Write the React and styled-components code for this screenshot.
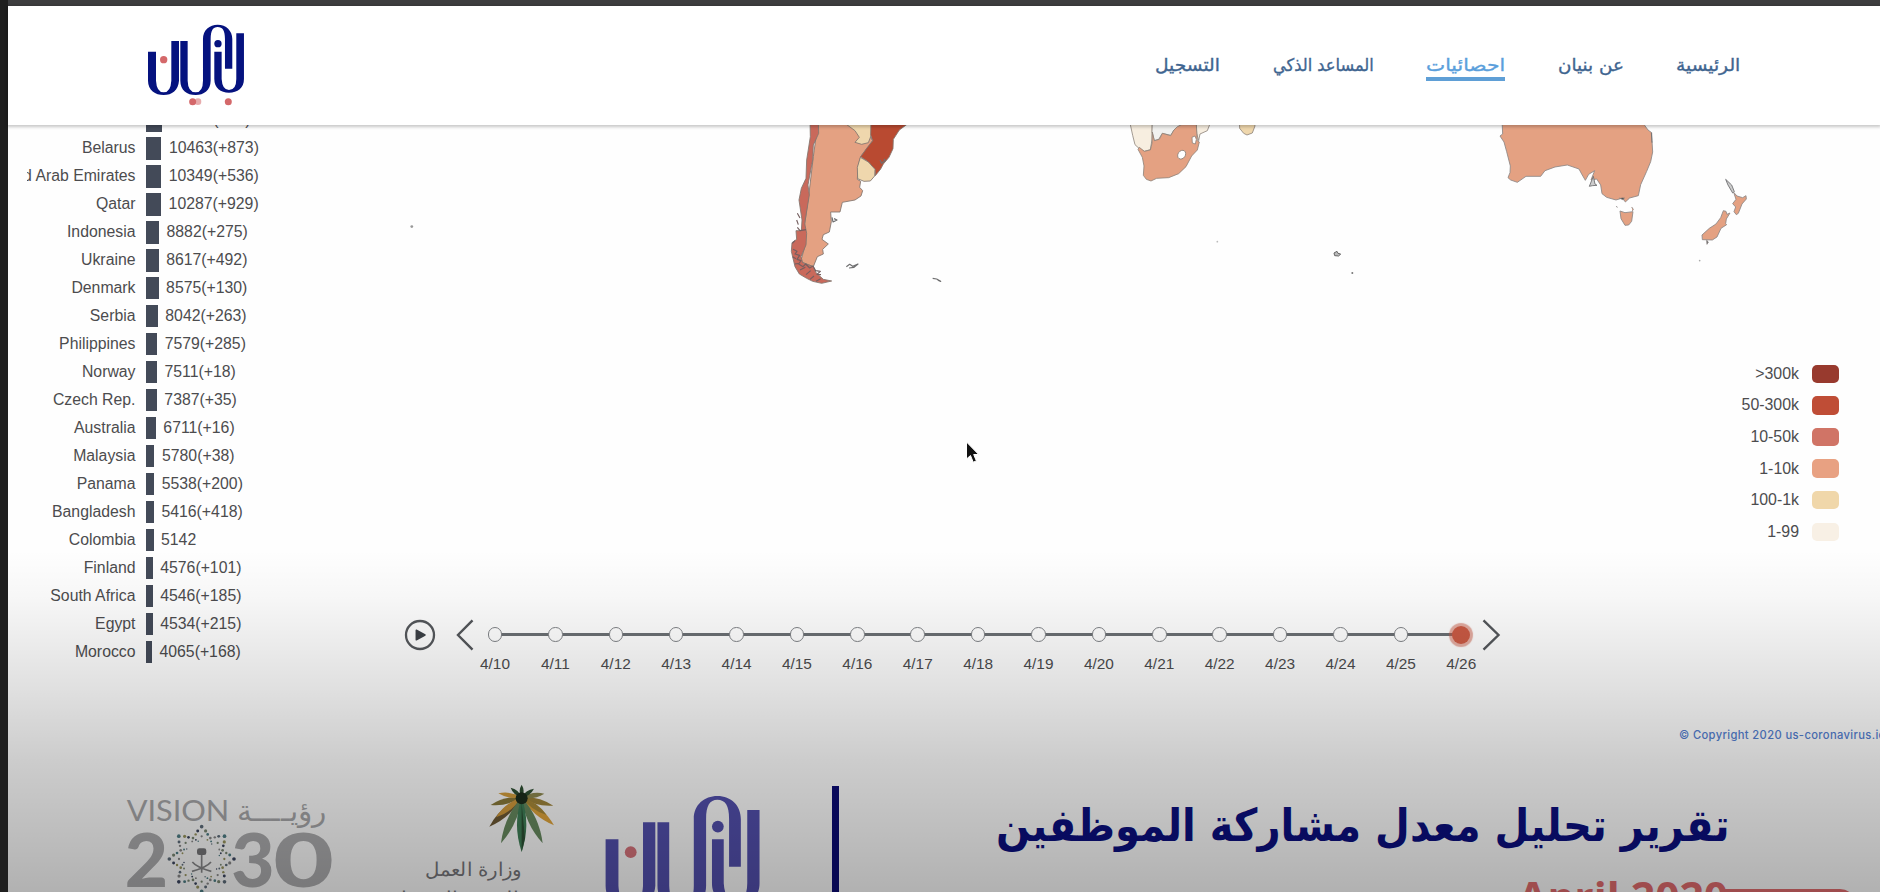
import React, { useLayoutEffect, useRef, useState } from "react";
import styled, { createGlobalStyle } from "styled-components";

const Global = createGlobalStyle`
  * { box-sizing: border-box; }
  html, body { margin: 0; padding: 0; background: #fff; overflow: hidden; }
`;

const latin = `"Liberation Sans", Arial, sans-serif`;
const arabic = `"DejaVu Sans", "Noto Sans", sans-serif`;

const Screen = styled.div`
  position: relative;
  display: flex;
  width: 1880px;
  height: 892px;
  overflow: hidden;
  background: #fefefe;
  font-family: ${latin};
  color: #4c4c4e;
`;
const SideEdge = styled.div`
  flex: none;
  width: 8px;
  background: #1f1f1f;
`;
const Page = styled.div`
  display: flex;
  flex-direction: column;
  flex: none;
  width: 1872px;
  height: 892px;
`;
const TopEdge = styled.div`
  flex: none;
  height: 6px;
  background: #3d3d3f;
`;
const Header = styled.header`
  position: relative;
  z-index: 2;
  flex: none;
  display: flex;
  justify-content: space-between;
  height: 119px;
  padding: 18px 140px 0 138.5px;
  background: #fff;
  box-shadow: 0 1px 3px 1px rgba(0, 0, 0, 0.22);
`;
const Nav = styled.nav`
  display: flex;
  direction: rtl;
  gap: 52.5px;
  padding-top: 28px;
`;
const NavItem = styled.a`
  height: 29px;
  padding-top: 2px;
  font: 17.5px/22px ${arabic};
  color: ${(p) => (p.$active ? "#5b9fdc" : "#3f6590")};
  -webkit-text-stroke: 0.35px currentColor;
  border-bottom: 4px solid ${(p) => (p.$active ? "#5f9fd6" : "transparent")};
`;
const FitBox = styled.span`
  display: block;
  width: ${(p) => p.$width}px;
  direction: ltr;
  white-space: nowrap;
`;
const FitInner = styled.span`
  display: inline-block;
  transform-origin: 0 50%;
`;

/* Text condensed or widened so that it fills a given width. */
function FitText({ width, children }) {
  const ref = useRef(null);
  const [scale, setScale] = useState(1);
  useLayoutEffect(() => {
    const natural = ref.current.offsetWidth;
    if (natural) setScale(width / natural);
  }, [width]);
  return (
    <FitBox $width={width}>
      <FitInner ref={ref} style={{ transform: `scaleX(${scale})` }}>{children}</FitInner>
    </FitBox>
  );
}

const Stats = styled.main`
  flex: none;
  display: flex;
  height: 656px;
`;
const BarChart = styled.div`
  flex: none;
  width: 392px;
  margin-top: -18.5px;
  padding-left: 19px;
`;
const BarRow = styled.div`
  display: flex;
  align-items: center;
  height: 27.98px;
  font-size: 15.8px;
`;
const BarLabel = styled.div`
  display: flex;
  justify-content: flex-end;
  width: 108.5px;
  overflow: hidden;
  white-space: nowrap;
`;
const Bar = styled.div`
  height: 22.4px;
  margin: 0 7.5px 0 10.5px;
  background: #434a58;
`;
const MapColumn = styled.div`
  flex: none;
  width: 1480px;
`;
const MapSvg = styled.svg`
  display: block;
  width: 1480px;
  height: 233px;
`;
const Legend = styled.div`
  display: flex;
  flex-direction: column;
  padding-right: 41.5px;
`;
const LegendRow = styled.div`
  display: flex;
  align-items: center;
  justify-content: flex-end;
  gap: 13px;
  height: 31.6px;
  font-size: 15.9px;
`;
const Swatch = styled.i`
  width: 26.5px;
  height: 18.5px;
  border-radius: 5px;
  background: ${(p) => p.$color};
`;
const Timeline = styled.div`
  display: flex;
  align-items: flex-start;
  margin-top: 70px;
  padding-left: 4px;
  height: 64px;
`;
const TimeIcon = styled.svg`
  flex: none;
  display: block;
  width: ${(p) => p.$w}px;
  height: 34px;
  margin-left: ${(p) => p.$ml || 0}px;
`;
const Track = styled.div`
  flex: none;
  display: flex;
  margin-left: -10.2px;
`;
const Stop = styled.div`
  position: relative;
  flex: none;
  display: flex;
  flex-direction: column;
  align-items: center;
  width: 60.4px;
  font-size: 15.4px;
  line-height: 18px;
  &::before {
    content: "";
    position: absolute;
    top: 15.6px;
    left: ${(p) => (p.$first ? "50%" : "0")};
    right: ${(p) => (p.$last ? "50%" : "0")};
    height: 3px;
    background: #6b6f73;
  }
`;
const Knob = styled.i`
  position: relative;
  width: ${(p) => (p.$on ? 18 : 14.5)}px;
  height: ${(p) => (p.$on ? 18 : 14.5)}px;
  margin: ${(p) => (p.$on ? "8px 0" : "9.75px 0")};
  border-radius: 50%;
  background: ${(p) => (p.$on ? "#ca5a44" : "#fff")};
  border: ${(p) => (p.$on ? "0" : "1.5px solid #808387")};
  box-shadow: ${(p) => (p.$on ? "0 0 1px 3px rgba(202,90,68,.5)" : "none")};
`;
const StopLabel = styled.span`
  margin-top: 3.5px;
`;
const Copyright = styled.div`
  margin: 45px 0 0 1279px;
  width: 201px;
  overflow: hidden;
  white-space: nowrap;
  font: 500 11.2px/16px Inter, sans-serif;
  letter-spacing: 0.36px;
  color: #547fd0;
`;
const Banner = styled.section`
  flex: none;
  display: flex;
  align-items: flex-start;
  height: 111px;
  overflow: hidden;
`;
const Partners = styled.svg`
  flex: none;
  display: block;
  width: 595.7px;
  height: 111px;
`;
const LogoSvg = styled.svg`
  flex: none;
  display: block;
  width: ${(p) => p.$width}px;
  height: ${(p) => p.$width * 0.8305}px;
  margin-top: ${(p) => p.$top || 0}px;
`;
const Divider = styled.div`
  flex: none;
  width: 7px;
  height: 106px;
  margin: 5px 157px 0 70.9px;
  background: #0b0b75;
`;
const Report = styled.div`
  flex: none;
  display: flex;
  flex-direction: column;
  align-items: flex-end;
  width: 734px;
`;
const Title = styled.h1`
  margin: 17px 0 0;
  font: bold 45px/56px ${arabic};
  color: #0b0f80;
`;
const Month = styled.div`
  display: flex;
  margin: 17px 2px 0 0;
  height: 40px;
  font: 700 42px/50px "Open Sans", sans-serif;
  color: #e26c6e;
`;
const FrameCorner = styled.div`
  width: 136px;
  height: 30px;
  margin: 108px 0 0 -10px;
  border: solid #e26c6e;
  border-width: 3px 3px 0 0;
  border-radius: 0 16px 0 0;
`;
const Shade = styled.div`
  position: absolute;
  inset: 550px 0 0 8px;
  z-index: 5;
  pointer-events: none;
  background: linear-gradient(rgba(0,0,0,0) 0, rgba(0,0,0,.03) 50px, rgba(0,0,0,.11) 130px, rgba(0,0,0,.195) 210px, rgba(0,0,0,.3) 342px);
`;
const Cursor = styled.svg`
  position: absolute;
  left: 964.5px;
  top: 441px;
  width: 15px;
  height: 23px;
`;

function Logo({ width, top, soft }) {
  const ink = soft ? "#5350ae" : "#05127f";
  const red = soft ? "#d8747c" : "#d4686a";
  return (
    <LogoSvg $width={width} $top={top} viewBox="440 70 295 245">
      <g fill={ink}>
        <path d="M443 153H467V240Q469 275 490 275Q511 275 513 240V121H536V240C534 268 515 283 490 283C465 283 443 268 443 240Z" />
        <path d="M540 121H562V240Q563 275 586 275Q608 275 608 240V115C608 88 628 72 652 72C678 72 696 90 696 115V204H674V115C674 90 667 79 652 79C638 79 631 90 631 115V240C631 268 610 283 586 283C560 283 540 268 540 240Z" />
        <path d="M642 153H664V235Q666 268 686 268Q708 268 708 235V98H731V235C731 262 712 276 686 276C661 276 642 262 642 235Z" />
        <circle cx="653" cy="129" r="11" />
      </g>
      <g fill={red}>
        <circle cx="490" cy="177" r="11" />
        <circle cx="593" cy="303" r="10" opacity=".55" />
        <circle cx="577" cy="303" r="10.5" />
        <circle cx="684" cy="303" r="10.5" />
      </g>
    </LogoSvg>
  );
}

const K1 = "#e4a182", K50 = "#c9695b", K300 = "#b94a31", H = "#efd7ad", L = "#f7eee0";

function WorldMap() {
  return (
    <MapSvg viewBox="400 125 1480 233">
      <g transform="translate(760 110) scale(.33333)" stroke="#83766f" strokeWidth="2.6" strokeLinejoin="round">
        <path fill={K1} d="M175 30L160 140 147 250 133 350 137 400 122 455 160 470 172 440 190 432 188 418 205 402 186 388 190 374 208 366 214 335 212 306 240 306 247 277 285 270 303 258 308 242 299 232 302 214 292 208 294 170 302 140 330 104 338 92 300 30Z" />
        <path fill={K50} d="M150 30L151 80 140 150 138 205 124 235 117 270 126 330 124 362 108 362 110 388 96 398 94 424 105 470 118 492 140 505 158 514 185 520 215 513 190 508 168 488 160 470 128 458 123 440 138 405 140 370 134 340 148 255 144 225 158 150 160 105 176 70 175 30Z" />
        <path fill={H} d="M255 40L285 62 298 82 285 97 305 103 325 98 334 75 335 30Z" />
        <path fill={K300} d="M333 30L332 75 338 92 320 115 302 140 325 156 345 178 346 197 362 177 370 162 387 142 399 116 400 88 418 60 440 44 438 30Z" />
        <path fill={H} d="M301 142L325 156 345 178 344 198 331 213 312 214 293 206 292 172Z" />
        <path fill="none" stroke="#755f60" strokeWidth="3.5" d="M97 400l8-8M99 418l12 6-6 8 14 4-8 12 12 4-7 10 13 8 8-8 12 12 10-6 8 14 14 2-10 9 12 1M112 310l8 14M110 330l5 14M112 352l8 10 18-3M98 440l10 6M104 462l14-2M120 480l16-8M138 494l14-12M150 508l12-10M168 514l14-8" />
        <path fill="none" strokeWidth="3.6" stroke="#6f6f70" d="M216 322l3 14 12-6-9-4M360 150l5 10 11-9-4-4M259 470l10-7 9 6 16-7-12 10-15 2M518 505l12 2 12 7-10-4" />
      </g>
      <g transform="translate(1100 110) scale(.33333)" stroke="#8b8178" strokeWidth="2.4" strokeLinejoin="round">
        <path fill={L} d="M88 30L98 76 105 104 118 116 133 124 151 119 156 90 157 30Z" />
        <path fill="#f1f1ef" d="M157 30L156 65 163 92 176 88 187 70 212 76 222 60 240 48 245 30Z" />
        <path fill={L} d="M288 30L290 70 296 92 300 72 322 62 329 44 326 30Z" />
        <path fill={K1} d="M232 50L222 60 212 77 187 70 178 88 163 92 157 66 156 100 151 120 133 124 118 112 114 118 127 142 132 168 130 196 139 208 153 213 170 205 206 203 236 191 258 170 275 138 292 120 298 96 292 92 289 44 245 44Z" />
        <ellipse fill="#fff" cx="245" cy="134" rx="11" ry="14" transform="rotate(35 245 134)" />
        <path fill="#fff" d="M276 82l9-4 4 10-3 14-9-3z" />
        <path fill={H} d="M418 30L419 55 431 70 441 75 457 69 465 48 462 30Z" />
        <path fill="#bbb" stroke="#666" strokeWidth="3" d="M702 429l9-5 3 6 8 2-6 6-12-1z" />
        <circle cx="757" cy="489" r="3" fill="#777" stroke="none" />
        <circle cx="352" cy="395" r="2.6" fill="#bbb" stroke="none" />
      </g>
      <g transform="translate(1480 110) scale(.33333)" stroke="#8d8887" strokeWidth="2.6" strokeLinejoin="round">
        <path fill={K1} d="M66 30L68 72 60 78 72 96 80 125 91 168 90 188 84 203 92 210 112 217 138 199 182 199 195 182 225 171 262 165 297 177 305 192 316 211 326 193 344 182 333 210 350 207 362 225 366 251 380 262 408 270 428 264 436 276 449 264 475 257 482 224 500 184 512 155 518 126 516 92 515 68 504 60 494 46 490 30Z" />
        <path fill="#ccc" stroke="#6d6d6f" d="M328 229l12-30 5 23 6 4-14 1zM514 68l2 30M737 208l18 17 8 20-5 4-14-24z" />
        <path fill={K1} d="M420 303l15 5 24-3-4 29-9 11-11 1-12-20zM455 291l5 7-3 5M408 289l5 3M761 247l10 11 17 5 10-6 1 10-13 15-11 28-6 4-7-9 5-14-9-10 10-13zM730 302l8 2 3 9 9-4-11 18-2 14 3 3-17 11-12 26-14 9-30-1-1-14 22-20 20-13 14-19z" />
        <path fill="#555" d="M680 391l5 5-4 7zM418 264l12 6 3-7" />
        <circle cx="659" cy="452" r="2.5" fill="#aaa" stroke="none" />
      </g>
      <circle cx="411.8" cy="226.6" r="1.4" fill="#999" />
    </MapSvg>
  );
}

const gemColors = ["#5f6e7c", "#7c8a74", "#3c4660", "#8a8a8a", "#4f7f86", "#9b9760"];
const gems = [];
for (let i = 0; i < 16; i++) {
  const a = (i * Math.PI) / 8 - Math.PI / 2;
  const tip = i % 2 === 0;
  const add = (r, da, s) =>
    gems.push({ x: 305 + Math.cos(a + da) * r, y: 297 + Math.sin(a + da) * r, s, c: gemColors[(i * 3 + gems.length) % 6] });
  if (tip) {
    add(97, 0, 5.5);
    add(85, 0.14, 4.8);
    add(85, -0.14, 4.4);
    add(68, 0, 3.4);
    add(76, 0.24, 4);
    add(76, -0.24, 3.6);
  } else {
    add(68, 0, 4);
    add(60, 0.1, 2.8);
    add(60, -0.1, 2.8);
    add(54, 0.2, 2.2);
  }
}
const leaf = (x, y, w, fill) => {
  const dx = x - 1265, dy = y - 112, d = Math.hypot(dx, dy);
  const nx = (-dy / d) * w, ny = (dx / d) * w, mx = 1265 + dx * 0.5, my = 112 + dy * 0.5;
  return <path key={`${x}-${y}`} fill={fill} d={`M1265 112Q${mx + nx} ${my + ny} ${x} ${y}Q${mx - nx} ${my - ny} 1265 112Z`} />;
};

function PartnerLogos() {
  return (
    <Partners viewBox="8 781 595.7 111">
      <g transform="translate(100 760) scale(.33333)">
        <g fill="#a8a8aa">
          <text x="80" y="183" fontFamily="Lato, sans-serif" fontWeight="400" fontSize="89" textLength="308" lengthAdjust="spacingAndGlyphs">VISION</text>
          <text x="410" y="183" fontFamily="DejaVu Sans, sans-serif" fontWeight="200" fontSize="88" textLength="270" lengthAdjust="spacingAndGlyphs">رؤيــــة</text>
        </g>
        <g fill="#adadaf" fontFamily="Lato, sans-serif" fontWeight="900" fontSize="222">
          <text x="74" y="381" textLength="130" lengthAdjust="spacingAndGlyphs">2</text>
          <text x="394" y="381" textLength="130" lengthAdjust="spacingAndGlyphs">3</text>
          <text x="520" y="381" textLength="182" lengthAdjust="spacingAndGlyphs">0</text>
        </g>
        {gems.map((g, i) => <circle key={i} cx={g.x} cy={g.y} r={g.s} fill={g.c} />)}
        <g fill="none" stroke="#88888a" strokeWidth="5">
          <path d="M305 280V338M277 306Q290 322 334 334M333 306Q320 322 276 334" />
          <rect x="291" y="265" width="28" height="20" rx="7" fill="#77777a" stroke="none" />
        </g>
        {leaf(1172, 135, 17, "#8a7a3a")}
        {leaf(1360, 137, 17, "#a0853a")}
        {leaf(1195, 100, 14, "#d6a03c")}
        {leaf(1333, 101, 14, "#8f8a50")}
        {leaf(1362, 196, 22, "#e0a53c")}
        {leaf(1168, 200, 23, "#6e5a35")}
        {leaf(1188, 172, 18, "#d29b3c")}
        {leaf(1340, 165, 16, "#a98a38")}
        {leaf(1203, 250, 24, "#678a5f")}
        {leaf(1328, 250, 24, "#678a5f")}
        {leaf(1232, 83, 12, "#2e4f32")}
        {leaf(1302, 86, 12, "#2e4f32")}
        {leaf(1265, 74, 12, "#2e4f32")}
        {leaf(1265, 276, 28, "#3f7f57")}
        <path fill="#2c5034" d="M1265 130L1275 235 1265 276Z" />
        <circle cx="1265" cy="115" r="18" fill="#1c2d1c" />
        <g fill="#77777b" fontFamily="DejaVu Sans, sans-serif" fontWeight="200" fontSize="56">
          <text x="975" y="348" textLength="290" lengthAdjust="spacingAndGlyphs">وزارة العمل</text>
          <text x="815" y="434" textLength="470" lengthAdjust="spacingAndGlyphs">والتنمية الاجتماعية</text>
        </g>
      </g>
    </Partners>
  );
}

const nav = [["الرئيسية", 64], ["عن بنيان", 66], ["احصائيات", 79], ["المساعد الذكي", 101], ["التسجيل", 65]];
const countries = [
  ["Korea", 10728, 10], ["Belarus", 10463, 873], ["United Arab Emirates", 10349, 536], ["Qatar", 10287, 929],
  ["Indonesia", 8882, 275], ["Ukraine", 8617, 492], ["Denmark", 8575, 130], ["Serbia", 8042, 263],
  ["Philippines", 7579, 285], ["Norway", 7511, 18], ["Czech Rep.", 7387, 35], ["Australia", 6711, 16],
  ["Malaysia", 5780, 38], ["Panama", 5538, 200], ["Bangladesh", 5416, 418], ["Colombia", 5142, 0],
  ["Finland", 4576, 101], ["South Africa", 4546, 185], ["Egypt", 4534, 215], ["Morocco", 4065, 168],
];
const legend = [[">300k", "#983a2e"], ["50-300k", "#bf4d36"], ["10-50k", "#d07466"], ["1-10k", "#e8a182"], ["100-1k", "#f0d7aa"], ["1-99", "#f8f0e5"]];
const days = Array.from({ length: 17 }, (_, i) => `4/${10 + i}`);

function TrackStops() {
  return (
    <Track>
      {days.map((day, i) => (
        <Stop key={day} $first={i === 0} $last={i === days.length - 1}>
          <Knob $on={i === days.length - 1} />
          <StopLabel>{day}</StopLabel>
        </Stop>
      ))}
    </Track>
  );
}

export default function App() {
  return (
    <Screen>
      <Global />
      <SideEdge />
      <Page>
        <TopEdge />
        <Header>
          <Logo width={98.3} />
          <Nav>
            {nav.map(([label, w], i) => (
              <NavItem key={label} $active={i === 2}><FitText width={w}>{label}</FitText></NavItem>
            ))}
          </Nav>
        </Header>
        <Stats>
          <BarChart>
            {countries.map(([name, n, d]) => (
              <BarRow key={name}>
                <BarLabel>{name}</BarLabel>
                <Bar style={{ width: n * 0.00147 }} />
                <span>{n}{d ? `(+${d})` : ""}</span>
              </BarRow>
            ))}
          </BarChart>
          <MapColumn>
            <WorldMap />
            <Legend>
              {legend.map(([label, color]) => (
                <LegendRow key={label}>{label}<Swatch $color={color} /></LegendRow>
              ))}
            </Legend>
            <Timeline>
              <TimeIcon $w={32} viewBox="0 0 32 34">
                <circle cx="16" cy="17" r="14" fill="none" stroke="#55585c" strokeWidth="2.3" />
                <path d="M12.3 12.2L21 17l-8.7 4.8z" fill="#3c4046" stroke="#3c4046" strokeWidth="1.5" strokeLinejoin="round" />
              </TimeIcon>
              <TimeIcon $w={20} $ml={19} viewBox="0 0 20 34">
                <path d="M17.5 2.3L3 17l14.5 14.700" fill="none" stroke="#54575b" strokeWidth="2.4" />
              </TimeIcon>
              <TrackStops />
              <TimeIcon $w={20} $ml={-10} viewBox="0 0 20 34">
                <path d="M2.5 2.3L17.5 17l-15 14.7" fill="none" stroke="#54575b" strokeWidth="2.4" />
              </TimeIcon>
            </Timeline>
            <Copyright>© Copyright 2020 us-coronavirus.io</Copyright>
          </MapColumn>
        </Stats>
        <Banner>
          <PartnerLogos />
          <Logo width={157.7} top={14} soft />
          <Divider />
          <Report>
            <Title><FitText width={734}>تقرير تحليل معدل مشاركة الموظفين</FitText></Title>
            <Month><FitText width={210}>April 2020</FitText></Month>
          </Report>
          <FrameCorner />
        </Banner>
      </Page>
      <Cursor viewBox="0 0 15 23">
        <path d="M1.5 1v17l4-3.5 2.7 6.7 3.2-1.3-2.7-6.4h5z" fill="#111" stroke="#fff" strokeWidth="1" />
      </Cursor>
      <Shade />
    </Screen>
  );
}
